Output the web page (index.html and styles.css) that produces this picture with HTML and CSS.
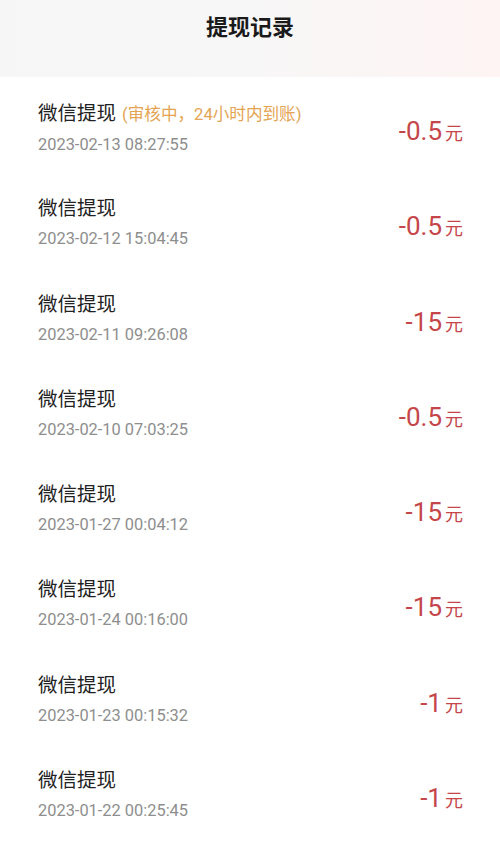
FILE: index.html
```html
<!DOCTYPE html>
<html lang="zh-CN">

<head>
    <meta charset="UTF-8">
    <meta name="viewport" content="width=device-width, initial-scale=1.0">
    <title>提现记录</title>
    <link rel="stylesheet" href="styles.css">
</head>

<body>
    <div class="header">
        <h1 class="title">提现记录</h1>
    </div>

    <ul class="records">
        <li class="record">
            <div class="info">
                <p class="name">微信提现<span class="status">(审核中，24小时内到账)</span></p>
                <p class="time">2023-02-13 08:27:55</p>
            </div>
            <div class="amount">-0.5<span class="unit">元</span></div>
        </li>
        <li class="record">
            <div class="info">
                <p class="name">微信提现</p>
                <p class="time">2023-02-12 15:04:45</p>
            </div>
            <div class="amount">-0.5<span class="unit">元</span></div>
        </li>
        <li class="record">
            <div class="info">
                <p class="name">微信提现</p>
                <p class="time">2023-02-11 09:26:08</p>
            </div>
            <div class="amount">-15<span class="unit">元</span></div>
        </li>
        <li class="record">
            <div class="info">
                <p class="name">微信提现</p>
                <p class="time">2023-02-10 07:03:25</p>
            </div>
            <div class="amount">-0.5<span class="unit">元</span></div>
        </li>
        <li class="record">
            <div class="info">
                <p class="name">微信提现</p>
                <p class="time">2023-01-27 00:04:12</p>
            </div>
            <div class="amount">-15<span class="unit">元</span></div>
        </li>
        <li class="record">
            <div class="info">
                <p class="name">微信提现</p>
                <p class="time">2023-01-24 00:16:00</p>
            </div>
            <div class="amount">-15<span class="unit">元</span></div>
        </li>
        <li class="record">
            <div class="info">
                <p class="name">微信提现</p>
                <p class="time">2023-01-23 00:15:32</p>
            </div>
            <div class="amount">-1<span class="unit">元</span></div>
        </li>
        <li class="record">
            <div class="info">
                <p class="name">微信提现</p>
                <p class="time">2023-01-22 00:25:45</p>
            </div>
            <div class="amount">-1<span class="unit">元</span></div>
        </li>
    </ul>
</body>

</html>
```

FILE: styles.css
```css
html,
body,
ul,
li,
p,
h1 {
    list-style: none;
    margin: 0;
    padding: 0;
}

body {
    background: #fff;
    font-family: Roboto, "Noto Sans CJK SC", sans-serif;
    color: #222;
}

.header {
    height: 77px;
    background: linear-gradient(90deg, #f6f6f6 0%, #f8f7f7 50%, #fdf4f3 100%);
}

.title {
    padding-top: 14px;
    line-height: 28px;
    font-size: 22px;
    font-weight: bold;
    text-align: center;
    color: #1a1a1a;
}

.record {
    height: 95.3px;
    box-sizing: border-box;
    padding: 25px 37px 0 38px;
    display: flex;
    justify-content: space-between;
}

.name {
    line-height: 24px;
    font-size: 19.5px;
    color: #222;
}

.status {
    margin-left: 6px;
    font-size: 16.6px;
    color: #e4a453;
}

.time {
    margin-top: 8px;
    line-height: 20px;
    font-size: 16.4px;
    color: #8e8e8e;
}

.amount {
    margin-top: 14px;
    line-height: 30px;
    font-size: 26px;
    color: #c5464a;
}

.unit {
    margin-left: 3px;
    font-size: 18px;
}
```
